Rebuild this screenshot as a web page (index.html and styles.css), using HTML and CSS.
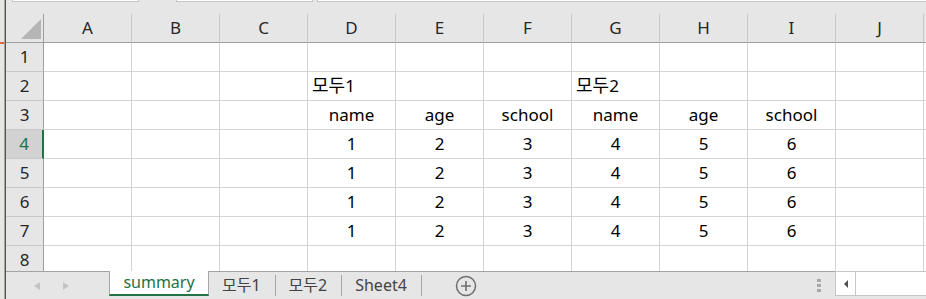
FILE: index.html
```html
<!DOCTYPE html>
<html lang="ko">
<head>
    <meta charset="UTF-8" />
    <title>summary - Excel</title>
    <link rel="stylesheet" href="styles.css">
</head>
<body>
    <div class="window">
        <div class="edge"><span class="edge-mark"></span></div>
        <div class="main">
            <div class="formula-strip">
                <div class="box box-name"></div>
                <div class="box box-mid"></div>
                <div class="box box-formula"></div>
            </div>

            <div class="sheet">
                <table class="grid">
                    <thead>
                        <tr>
                            <th class="corner"><div class="corner-tri"></div></th>
                            <th class="col">A</th>
                            <th class="col">B</th>
                            <th class="col">C</th>
                            <th class="col">D</th>
                            <th class="col">E</th>
                            <th class="col">F</th>
                            <th class="col">G</th>
                            <th class="col">H</th>
                            <th class="col">I</th>
                            <th class="col">J</th>
                            <th class="col"></th>
                        </tr>
                    </thead>
                    <tbody>
                        <tr>
                            <th class="row">1</th>
                            <td></td><td></td><td></td><td></td><td></td><td></td><td></td><td></td><td></td><td></td><td></td>
                        </tr>
                        <tr>
                            <th class="row">2</th>
                            <td></td><td></td><td></td>
                            <td class="left"><span class="ko">모두</span>1</td><td></td><td></td>
                            <td class="left"><span class="ko">모두</span>2</td><td></td><td></td><td></td><td></td>
                        </tr>
                        <tr>
                            <th class="row">3</th>
                            <td></td><td></td><td></td>
                            <td>name</td><td>age</td><td>school</td>
                            <td>name</td><td>age</td><td>school</td><td></td><td></td>
                        </tr>
                        <tr>
                            <th class="row active">4</th>
                            <td></td><td></td><td></td>
                            <td>1</td><td>2</td><td>3</td><td>4</td><td>5</td><td>6</td><td></td><td></td>
                        </tr>
                        <tr>
                            <th class="row">5</th>
                            <td></td><td></td><td></td>
                            <td>1</td><td>2</td><td>3</td><td>4</td><td>5</td><td>6</td><td></td><td></td>
                        </tr>
                        <tr>
                            <th class="row">6</th>
                            <td></td><td></td><td></td>
                            <td>1</td><td>2</td><td>3</td><td>4</td><td>5</td><td>6</td><td></td><td></td>
                        </tr>
                        <tr>
                            <th class="row">7</th>
                            <td></td><td></td><td></td>
                            <td>1</td><td>2</td><td>3</td><td>4</td><td>5</td><td>6</td><td></td><td></td>
                        </tr>
                        <tr>
                            <th class="row">8</th>
                            <td></td><td></td><td></td><td></td><td></td><td></td><td></td><td></td><td></td><td></td><td></td>
                        </tr>
                    </tbody>
                </table>
            </div>

            <div class="tabbar">
                <div class="tab-nav">
                    <span class="arrow arrow-left"></span>
                    <span class="arrow arrow-right"></span>
                </div>
                <div class="tab active">summary</div>
                <div class="tab">모두1</div>
                <div class="tab">모두2</div>
                <div class="tab">Sheet4</div>
                <div class="add-sheet">
                    <svg width="22" height="22" viewBox="0 0 22 22">
                        <circle cx="11" cy="11" r="9.5" fill="none" stroke="#6f6f6f" stroke-width="1.5"/>
                        <path d="M11 6 V16 M6 11 H16" stroke="#6f6f6f" stroke-width="1.6"/>
                    </svg>
                </div>
                <div class="splitter">
                    <span></span><span></span><span></span>
                </div>
                <div class="hscroll">
                    <div class="hscroll-btn"><span class="hscroll-arrow"></span></div>
                    <div class="hscroll-track"></div>
                </div>
            </div>
        </div>
    </div>
</body>
</html>
```

FILE: styles.css
```css
html, body {
    margin: 0;
    padding: 0;
}

body {
    width: 926px;
    height: 299px;
    overflow: hidden;
    background: #e6e6e6;
    font-family: "Noto Sans", "Noto Sans CJK KR", sans-serif;
}

.window {
    display: flex;
    height: 299px;
}

/* window edge at the far left */
.edge {
    position: relative;
    width: 4px;
    flex: none;
    background: #e6e6e6;
    border-right: 1px solid #a3a3a3;
    box-shadow: 1px 0 0 #217346;
    margin-right: 1px;
}

.edge-mark {
    position: absolute;
    left: 0;
    top: 42px;
    width: 4px;
    height: 2px;
    background: #e2673f;
}

.main {
    flex: 1;
    display: flex;
    flex-direction: column;
    min-width: 0;
}

/* remains of the formula bar */
.formula-strip {
    height: 14px;
    flex: none;
    display: flex;
    align-items: flex-start;
}

.box {
    height: 2px;
    box-sizing: border-box;
    background: #fff;
    border: 1px solid #c6c6c6;
    border-top: none;
}

.box-name {
    margin-left: 6px;
    width: 127px;
}

.box-mid {
    margin-left: 37px;
    width: 137px;
}

.box-formula {
    margin-left: 4px;
    flex: 1;
    border-right: none;
}

/* the grid */
.sheet {
    flex: 1;
    overflow: hidden;
    background: #fff;
}

.grid {
    border-collapse: separate;
    border-spacing: 0;
    table-layout: fixed;
    width: 1006px;
    font-size: 17px;
    color: #000;
}

.grid th,
.grid td {
    box-sizing: border-box;
    height: 29px;
    padding: 0;
    line-height: 28px;
    text-align: center;
    white-space: nowrap;
    overflow: hidden;
}

.grid td {
    width: 88px;
    border-right: 1px solid #d4d4d4;
    border-bottom: 1px solid #d4d4d4;
    vertical-align: bottom;
}

.grid td.left {
    text-align: left;
    padding-left: 4px;
    overflow: visible;
}

.ko {
    font-size: 18px;
    line-height: 20px;
}

.grid th {
    font-weight: normal;
    background: #e6e6e6;
    color: #262626;
}

.grid th.col {
    width: 88px;
    border-right: 1px solid #c8c8c8;
    border-bottom: 1px solid #9e9e9e;
    line-height: 26px;
}

.grid th.corner {
    width: 38px;
    border-right: 1px solid #9e9e9e;
    border-bottom: 1px solid #9e9e9e;
    vertical-align: bottom;
}

.corner-tri {
    width: 0;
    height: 0;
    margin: 0 2px 3px auto;
    border-left: 20px solid transparent;
    border-bottom: 20px solid #b5b5b5;
}

.grid th.row {
    width: 38px;
    border-right: 1px solid #9e9e9e;
    border-bottom: 1px solid #c8c8c8;
}

.grid th.row.active {
    background: #d2d2d2;
    color: #217346;
    border-right: 2px solid #217346;
}

/* sheet tabs */
.tabbar {
    flex: none;
    height: 28px;
    box-sizing: border-box;
    border-top: 1px solid #a3a3a3;
    display: flex;
    align-items: center;
    font-size: 16px;
    color: #444;
}

.tab-nav {
    width: 103px;
    flex: none;
    display: flex;
    align-items: center;
    padding-left: 28px;
    box-sizing: border-box;
    gap: 23px;
}

.arrow {
    width: 0;
    height: 0;
    border-top: 4.5px solid transparent;
    border-bottom: 4.5px solid transparent;
}

.arrow-left {
    border-right: 6px solid #c3c3c3;
}

.arrow-right {
    border-left: 6px solid #c3c3c3;
}

.tab {
    height: 21px;
    line-height: 21px;
    padding: 0 14px 0 13px;
    border-right: 1px solid #a6a6a6;
    white-space: nowrap;
}

.tab.active {
    align-self: flex-start;
    margin-top: -1px;
    height: 25px;
    line-height: 23px;
    box-sizing: border-box;
    width: 100px;
    padding: 0;
    text-align: center;
    background: #fff;
    color: #217346;
    border-left: 1px solid #a6a6a6;
    border-right: 1px solid #a6a6a6;
    border-bottom: 2px solid #217346;
}

.add-sheet {
    margin-left: 33px;
    width: 22px;
    height: 22px;
    margin-top: 1px;
}

.add-sheet svg {
    display: block;
}

.splitter {
    margin-left: auto;
    width: 4px;
    display: flex;
    flex-direction: column;
    gap: 2px;
    margin-right: 14px;
}

.splitter span {
    display: block;
    width: 4px;
    height: 3px;
    background: #a8a8a8;
}

.hscroll {
    align-self: flex-start;
    margin-top: -1px;
    width: 91px;
    height: 25px;
    box-sizing: border-box;
    border: 1px solid #c6c6c6;
    border-right: none;
    display: flex;
    background: #fff;
}

.hscroll-btn {
    width: 19px;
    border-right: 1px solid #c6c6c6;
    display: flex;
    align-items: center;
    justify-content: center;
}

.hscroll-arrow {
    width: 0;
    height: 0;
    border-top: 4px solid transparent;
    border-bottom: 4px solid transparent;
    border-right: 4px solid #505050;
}

.hscroll-track {
    flex: 1;
}
```
